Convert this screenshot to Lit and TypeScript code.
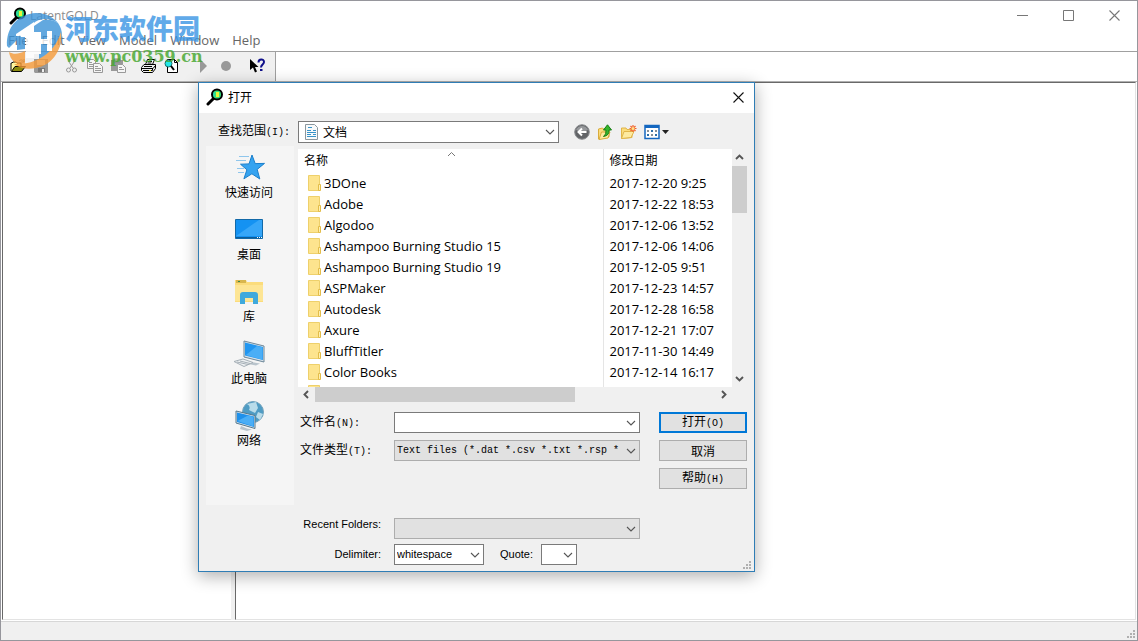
import { LitElement, html, css, svg } from "lit";
import { customElement, state } from "lit/decorators.js";

const FOLDERS: [string, string][] = [
  ["3DOne", "2017-12-20 9:25"],
  ["Adobe", "2017-12-22 18:53"],
  ["Algodoo", "2017-12-06 13:52"],
  ["Ashampoo Burning Studio 15", "2017-12-06 14:06"],
  ["Ashampoo Burning Studio 19", "2017-12-05 9:51"],
  ["ASPMaker", "2017-12-23 14:57"],
  ["Autodesk", "2017-12-28 16:58"],
  ["Axure", "2017-12-21 17:07"],
  ["BluffTitler", "2017-11-30 14:49"],
  ["Color Books", "2017-12-14 16:17"],
  ["", ""],
];

const magnifier = html`<svg width="18" height="18" viewBox="0 0 18 18" aria-hidden="true">
  <path d="M2 16 7.500 10.500" stroke="#000" stroke-width="3" stroke-linecap="round" />
  <circle cx="11" cy="6.500" r="5" fill="#35e07a" stroke="#000" stroke-width="2" />
  <path d="M10 4h3v5h-3z" fill="#e8f53a" />
  <path d="M8 4.500v4" stroke="#25d8d0" stroke-width="1" />
</svg>`;

const chevron = html`<svg class="chev" width="10" height="6" viewBox="0 0 10 6" aria-hidden="true">
  <path d="M1 1 5 5 9 1" fill="none" stroke="#555" stroke-width="1.100" />
</svg>`;

const arrow = (d: string) => html`<svg width="9" height="9" viewBox="0 0 9 9" aria-hidden="true">
  <path d=${d} fill="none" stroke="#555" stroke-width="1.900" />
</svg>`;

const cross = (color: string) => html`<svg width="11" height="11" viewBox="0 0 11 11" aria-hidden="true">
  <path d="M.5.5l10 10M10.500.5l-10 10" stroke=${color} stroke-width="1.100" />
</svg>`;

const grip = html`<svg class="grip" width="9" height="9" viewBox="0 0 9 9" aria-hidden="true">
  <path d="M6 0h2v2h-2zM3 3h2v2h-2zM6 3h2v2h-2zM0 6h2v2h-2zM3 6h2v2h-2zM6 6h2v2h-2z" fill="#b0b0b0" />
</svg>`;

const folderIcon = html`<svg width="14" height="16" viewBox="0 0 14 16" aria-hidden="true">
  <path d="M.5.5h11v15h-11z" fill="#fde48e" stroke="#eed06b" />
  <path d="M10.500 9.500h2v6h-2z" fill="#fff0b0" stroke="#e3bd4a" />
</svg>`;

const TOOL_GROUPS = [
  [
    {
      name: "Open",
      art: svg`<path d="M1 13V5h1l1-1h3l1 1h4v3" fill="#fff8a0" stroke="#000"/><path d="M1.500 13.500 5 8.500h10.500l-4 5z" fill="#8a8a10" stroke="#000"/><path d="M9 3c2-2 4-1 5 1m0-3v3h-3" fill="none" stroke="#777"/>`,
    },
    {
      name: "Save",
      art: svg`<path d="M1 1h14v14H2l-1-1z" fill="#999"/><path d="M4 2h8v5H4z" fill="#eee"/><path d="M5 10h7v4H5z" fill="#777"/><path d="M9 11h2v3H9z" fill="#eee"/>`,
    },
  ],
  [
    {
      name: "Cut",
      art: svg`<path d="M5 1v3l4 6M10 1v3l-4 6" fill="none" stroke="#999"/><circle cx="4.500" cy="12" r="2" fill="none" stroke="#999"/><circle cx="10.500" cy="12" r="2" fill="none" stroke="#999"/>`,
    },
    {
      name: "Copy",
      art: svg`<path d="M.5 1.500h6l2 2v7h-8z" fill="#f5f5f5" stroke="#999"/><path d="M2 4.500h3M2 6.500h4M2 8.500h4" stroke="#999"/><path d="M6.500 5.500h6l3 3v6h-9z" fill="#f5f5f5" stroke="#999"/><path d="M8 8.500h3M8 10.500h6M8 12.500h6" stroke="#999"/>`,
    },
    {
      name: "Paste",
      art: svg`<path d="M1 2h12v11H1z" fill="#999"/><path d="M4 1h6v3H4z" fill="#bbb" stroke="#888"/><path d="M7.500 6.500h5l3 3v5h-8z" fill="#f5f5f5" stroke="#999"/><path d="M9 9.500h3M9 11.500h5" stroke="#999"/>`,
    },
  ],
  [
    {
      name: "Print",
      art: svg`<path d="M4.500 6.500 6.500 1.500h7l-2 5z" fill="#fff" stroke="#000"/><path d="M7 3.500h4M6.500 5h4" stroke="#000"/><path d="M.5 9.500 3 6.500h11.500v4l-3 4H2.500l-2-2z" fill="#eee" stroke="#000"/><path d="M1 10.500h11l2.500-3M2 12.500h9.500v-2M3 8.500h8" fill="none" stroke="#000"/><path d="M8 12h2v1H8z" fill="#dede10"/>`,
    },
    {
      name: "Print preview",
      art: svg`<path d="M3.500 1.500h7l3 3v10h-10z" fill="#fff" stroke="#000"/><path d="M10.500 1.500v3h3" fill="none" stroke="#000"/><circle cx="4.500" cy="5.500" r="3.500" fill="#20e8e8" stroke="#1a6a6a"/><path d="M7 8l3 4" stroke="#000" stroke-width="2"/>`,
    },
  ],
  [
    { name: "Run", art: svg`<path d="M5 1v14l7-7z" fill="#999"/>` },
    { name: "Stop", art: svg`<circle cx="8" cy="8" r="5" fill="#999"/>` },
  ],
  [
    {
      name: "Context help",
      art: svg`<path d="M1 1v11l3-2.500 2 5 2-1-2-4.500h3.500z" fill="#000"/><path d="M9.500 4.500c0-4 5.500-4 5.500-.5 0 2.500-3 2.500-3 5.500" fill="none" stroke="#10108a" stroke-width="2"/><path d="M11 11h2.500v2H11z" fill="#10108a"/>`,
    },
  ],
];

const PLACES = [
  {
    name: "快速访问",
    art: svg`<path d="M19 3l3.200 8.600 9.300-.2-7.300 6 2.600 9.600-7.900-5.200-8 5 3-9-6.400-5.600 8.500-.3z" fill="#35a3f0" stroke="#1b7fcb"/><path d="M6 4.500h10M3 8.500h10M4 16.500h7M5 20.500h6" stroke="#8fc6ec"/>`,
  },
  {
    name: "桌面",
    art: svg`<path d="M2.500 5.500h27v19h-27z" fill="#1492f2" stroke="#1269a8"/><path d="M3 22 26 6h3v16z" fill="#36a6f8"/><path d="M3 23.500h26" stroke="#0b5c99" stroke-width="1"/><path d="M24 23.500h5" stroke="#fff" stroke-dasharray="1 1"/>`,
  },
  {
    name: "库",
    art: svg`<path d="M2 4h11l1 2h16v20H2z" fill="#fbdc7c"/><path d="M3 4h10v3H3z" fill="#d8b64e"/><path d="M5 5h2v1H5z" fill="#3b8a4b"/><path d="M2 9h28v16H2z" fill="#fde594"/><path d="M7 28V19q0-3 3-3h12q3 0 3 3v9h-5v-6h-8v6z" fill="#3fa9dc"/>`,
  },
  {
    name: "此电脑",
    art: svg`<path d="M11 3 31 8v16l-20-5z" fill="#d7e2ea" stroke="#6d8798"/><path d="M12 4.500 30 9v13l-18-4.500z" fill="#2196f0"/><path d="M13 17 24 8l5.500 1.300v12.500z" fill="#4aaef6"/><path d="M18 24l9 1.500-4 2-8-1.500z" fill="#b9c4cc"/><path d="M1 23.500 10 21l10 3.500-9 4z" fill="#eef1f3" stroke="#a5afb6"/><path d="M4 24l11 2.500M7 23l10 2.500" stroke="#a5afb6"/>`,
  },
  {
    name: "网络",
    art: svg`<circle cx="20" cy="12" r="10.500" fill="#4f9cc4" stroke="#78a5bd"/><path d="M14 4q4 2 2 6l6 3 3-5-2-6zM25 12l5 2-3 6-4-3z" fill="#b9dcea"/><path d="M3 11l19 4.500v13L3 23z" fill="#d7e2ea" stroke="#55788d"/><path d="M4 12.500 21 16.500v10.500l-17-5z" fill="#1f90ea"/><path d="M4.500 21 15 15.500l5.500 1.300v9.700z" fill="#4aaef6"/><path d="M8 26l6 2.500 5 1-5 1.500-7-2z" fill="#b9c4cc"/>`,
  },
];

@customElement("app-root")
export class AppRoot extends LitElement {
  @state() private fileName = "";

  static styles = css`
    :host {
      display: block;
      font-family: "Open Sans", "Noto Sans CJK SC", sans-serif;
      font-size: 12px;
      color: #000;
    }
    * {
      box-sizing: border-box;
    }
    svg {
      display: block;
      flex: none;
    }
    button {
      font: inherit;
      color: inherit;
      margin: 0;
      padding: 0;
      border: 0;
      background: none;
      display: flex;
      align-items: center;
      justify-content: center;
    }
    .window {
      position: relative;
      display: flex;
      flex-direction: column;
      height: 100vh;
      background: #fff;
      border: 1px solid #96969c;
      overflow: hidden;
    }
    .titlebar {
      display: flex;
      align-items: center;
      height: 29px;
      padding-left: 8px;
      color: #8c8c8c;
    }
    .titlebar h1 {
      flex: 1;
      margin: 0 0 0 3px;
      font-size: 12px;
      font-weight: 400;
    }
    .caption {
      width: 46px;
      height: 28px;
    }
    .menubar {
      display: flex;
      height: 21px;
      padding: 0 0 1px 1px;
      color: #666;
      font-size: 13px;
    }
    .menubar button {
      padding: 0 7px 0 6px;
    }
    .toolrow {
      height: 30px;
      border-top: 1px solid #a0a0a0;
      display: flex;
    }
    .toolbar {
      display: flex;
      align-items: center;
      gap: 8px;
      padding: 0 7px 2px 5px;
      background: #f0f0f0;
      border-right: 1px solid #a0a0a0;
    }
    .group {
      display: flex;
    }
    .tool {
      width: 23px;
      height: 22px;
    }
    .workspace {
      flex: 1;
      display: flex;
      padding: 0 1px;
      border-top: 1px solid #b0b0b0;
      border-bottom: 1px solid #fff;
    }
    .pane {
      border-top: 1px solid #696969;
      border-left: 1px solid #696969;
      border-bottom: 1px solid #e3e3e3;
    }
    .tree {
      width: 229px;
    }
    .splitter {
      width: 4px;
      background: #f0f0f0;
    }
    .view {
      flex: 1;
      border-right: 1px solid #e3e3e3;
    }
    .status {
      display: flex;
      justify-content: flex-end;
      align-items: flex-end;
      height: 19px;
      background: #f0f0f0;
      border-top: 1px solid #d7d7d7;
      padding: 1px;
    }
    .watermark {
      position: absolute;
      left: 4px;
      top: 11px;
      display: flex;
      gap: 2px;
      opacity: 0.8;
      pointer-events: none;
    }
    .brand {
      display: flex;
      flex-direction: column;
    }
    .brand-name {
      font: 900 27px/32px "Noto Sans CJK SC", sans-serif;
      color: #3a96e4;
    }
    .brand-url {
      font: bold 16px/26px "DejaVu Serif", serif;
      color: #43a62c;
    }

    .dialog {
      position: absolute;
      left: 197px;
      top: 81px;
      width: 557px;
      background: #f0f0f0;
      border: 1px solid #2f7db5;
      box-shadow: 0 4px 16px rgba(0, 0, 0, 0.32);
    }
    .dialog-title {
      display: flex;
      align-items: center;
      gap: 4px;
      height: 30px;
      padding: 0 8px 2px 7px;
      background: #fff;
    }
    .dialog-title h2 {
      flex: 1;
      margin: 0;
      font-size: 12px;
      font-weight: 400;
    }
    .dialog-title button {
      width: 15px;
      height: 15px;
    }
    .body {
      display: grid;
      grid-template-columns: 88px 1fr;
      column-gap: 4px;
      row-gap: 3px;
      padding: 8px 7px 6px;
    }
    .song {
      font-family: "Noto Sans CJK SC", sans-serif;
      line-height: 18px;
    }
    .mono {
      font: 10px/18px "Liberation Mono", monospace;
    }
    .look-label {
      padding-left: 12px;
      white-space: nowrap;
    }
    .look {
      display: flex;
      align-items: center;
      gap: 15px;
    }
    .combo {
      display: grid;
      align-items: center;
      height: 21px;
    }
    .combo > * {
      grid-area: 1 / 1;
    }
    .combo select,
    .combo input {
      appearance: none;
      width: 100%;
      min-width: 0;
      height: 100%;
      margin: 0;
      padding: 0 18px 0 2px;
      border: 1px solid #7a7a7a;
      border-radius: 0;
      background: #fff;
      font: inherit;
      color: #000;
      outline: 0;
    }
    .combo .chev {
      justify-self: end;
      margin-right: 4px;
      pointer-events: none;
    }
    .combo.gray select {
      background: #e1e1e1;
      border-color: #adadad;
    }
    .look-combo {
      width: 261px;
      height: 22px;
    }
    .look-combo select {
      padding-left: 24px;
    }
    .look-combo .doc {
      margin-left: 7px;
      pointer-events: none;
    }
    .look-tools {
      display: flex;
      gap: 7px;
    }
    .places {
      align-self: start;
      height: 359px;
      margin: 0;
      padding: 6px 2px 6px 0;
      list-style: none;
      background: #f5f5f5;
    }
    .places button {
      width: 100%;
      height: 62px;
      flex-direction: column;
      justify-content: flex-start;
      line-height: 18px;
    }
    .content {
      padding-top: 3px;
    }
    .browser {
      display: grid;
      grid-template-columns: 1fr 15px;
      grid-template-rows: 238px 15px;
    }
    .list {
      overflow: hidden;
      background: #fff;
    }
    table {
      width: 100%;
      border-collapse: collapse;
      table-layout: fixed;
      font-size: 13px;
    }
    th,
    td {
      height: 21px;
      padding: 0;
      text-align: left;
      font-weight: 400;
      line-height: 20px;
      white-space: nowrap;
    }
    th {
      height: 23px;
      padding-left: 6px;
      font-size: 12px;
    }
    .name-col {
      width: 305px;
      border-right: 1px solid #e5e5e5;
    }
    .head {
      display: grid;
      grid-template-columns: 1fr 1fr;
    }
    .head svg {
      margin-left: -6px;
    }
    .file {
      display: flex;
      align-items: center;
      gap: 2px;
      padding-left: 10px;
    }
    td + td {
      padding-left: 6px;
    }
    .scroll {
      display: flex;
      background: #f0f0f0;
    }
    .scroll.vertical {
      flex-direction: column;
      justify-content: space-between;
    }
    .scroll button {
      width: 17px;
      height: 15px;
      flex: none;
    }
    .vertical button {
      width: 15px;
      height: 17px;
    }
    .track {
      flex: 1;
    }
    .thumb {
      background: #cdcdcd;
    }
    .vertical .thumb {
      height: 23%;
    }
    .horizontal .thumb {
      width: 65%;
      height: 100%;
    }
    .form {
      display: grid;
      grid-template-columns: 94px 1fr 88px;
      grid-auto-rows: 21px;
      row-gap: 7px;
      padding: 10px 0 0 2px;
    }
    .form .combo {
      margin-right: 19px;
    }
    .push {
      border: 1px solid #adadad;
      background: #e1e1e1;
    }
    .push.default {
      border: 2px solid #0078d7;
    }
    .extra {
      display: grid;
      grid-template-columns: 83px 1fr;
      grid-auto-rows: 21px;
      gap: 5px 13px;
      padding: 29px 107px 0 0;
      font: 11px/13px "Liberation Sans", sans-serif;
    }
    .extra > label {
      text-align: right;
    }
    .extra-row {
      display: flex;
      align-items: center;
    }
    .extra .line {
      line-height: 20px;
    }
    .delimiter {
      width: 90px;
      margin-right: 16px;
    }
    .quote {
      width: 36px;
      margin-left: 8px;
    }
    .dialog > .grip {
      position: absolute;
      right: 2px;
      bottom: 1px;
    }
  `;

  private latin(text: string) {
    return html`<span class="mono">${text}</span>`;
  }

  private renderToolbar() {
    return html`<div class="toolrow">
      <div class="toolbar" role="toolbar">
        ${TOOL_GROUPS.map(
          (group) => html`<div class="group">
            ${group.map(
              (t) => html`<button class="tool" aria-label=${t.name}>
                <svg width="16" height="16" viewBox="0 0 16 16" fill="none">${t.art}</svg>
              </button>`
            )}
          </div>`
        )}
      </div>
    </div>`;
  }

  private renderWatermark() {
    return html`<div class="watermark">
      <svg width="58" height="60" viewBox="0 0 58 60" aria-hidden="true">
        <path d="M2 34C1 15 13 2 31 1c10 0 17 4 22 10-9-5-17-5-23-1L4 36z" fill="#3c93d8" />
        <path d="M53 11c6 8 5 20-1 28-5 6-11 9-18 10V25h-5V14l9-6c6-1 11 0 15 3z" fill="#3c93d8" />
        <path d="M56 20c2 17-8 33-25 36-9 2-17 0-22-4 20 1 40-9 47-32z" fill="#f59a38" />
        <path d="M4 40c5 3 10 2 16-1v15c-9-1-15-6-16-14z" fill="#f59a38" />
        <path d="M11 22 29 10v36h-8V24H11z" fill="#fff" />
        <path d="M12 25h8v12l-8 1z" fill="#3c93d8" />
        <path d="M29 20h7v7h6v-8h5v20h-5v-7h-6v10h-7z" fill="#fff" />
      </svg>
      <div class="brand">
        <span class="brand-name">河东软件园</span>
        <span class="brand-url">www.pc0359.cn</span>
      </div>
    </div>`;
  }

  private renderLookIn() {
    return html`<label class="look-label song" for="look">查找范围${this.latin("(I):")}</label>
      <div class="look">
        <div class="combo look-combo">
          <select id="look"><option>文档</option></select>
          <svg class="doc" width="13" height="16" viewBox="0 0 13 16" aria-hidden="true">
            <path d="M.5.5h9l3 3v12H.5z" fill="#f8fafb" stroke="#8b979e" />
            <path d="M3 3.500h4M2 6.500h4M8 6.500h3M2 8.500h9M2 10.500h4M8 10.500h3M2 12.500h9" stroke="#3793c9" />
          </svg>
          ${chevron}
        </div>
        <div class="look-tools">
          <button aria-label="后退">
            <svg width="16" height="16" viewBox="0 0 16 16">
              <circle cx="8" cy="8" r="7.300" fill="#626467" stroke="#8b8d90" />
              <path d="M2 6a6.500 6.500 0 0 1 12 0q-6 3-12 0z" fill="#96989b" />
              <path d="M12.500 8H4.500M8 4.500 4.500 8 8 11.500" fill="none" stroke="#fff" stroke-width="2" />
            </svg>
          </button>
          <button aria-label="向上一级">
            <svg width="16" height="16" viewBox="0 0 16 16">
              <path d="M1.500 15V5l4-1 1 1H12v8z" fill="#fbdc7c" stroke="#d9ac3c" />
              <path d="M2 15.500 4.500 8H13l-2 6z" fill="#fdeaa0" stroke="#d9ac3c" />
              <path d="M6.500 12.500q3-2 2.500-6.500H6.500L10.500.8l4 5.200H12q.5 5.500-5.500 6.500z" fill="#35b52c" stroke="#177d14" />
            </svg>
          </button>
          <button aria-label="新建文件夹">
            <svg width="17" height="16" viewBox="0 0 17 16">
              <path d="M1.500 14.500V4h4.500l1 1.500h5v8z" fill="#fbdc7c" stroke="#e0b54a" />
              <path d="M1.500 14.500 4 7.500h10l-3 6z" fill="#fdeaa0" stroke="#e0b54a" />
              <path d="M13 1v7M9.500 4.500h7M10.500 2l5 5M15.500 2l-5 5" stroke="#f2622c" stroke-width="1.200" />
              <circle cx="13" cy="4.500" r="1.500" fill="#ffe28a" />
            </svg>
          </button>
          <button aria-label="查看">
            <svg width="26" height="16" viewBox="0 0 26 16">
              <path d="M1 1.500h14v13H1z" fill="#fff" stroke="#1467c0" stroke-width="1.500" />
              <path d="M1 1h14v3H1z" fill="#1467c0" />
              <path d="M3 6h2v2H3zM11 6h2v2h-2zM7 10h2v2H7z" fill="#8a9096" />
              <path d="M7 6h2v2H7zM3 10h2v2H3zM11 10h2v2h-2z" fill="#2f6fa8" />
              <path d="M18 6h7l-3.500 4z" fill="#222" />
            </svg>
          </button>
        </div>
      </div>`;
  }

  private renderBrowser() {
    return html`<div class="browser">
      <div class="list">
        <table>
          <thead>
            <tr>
              <th class="name-col">
                <div class="head">
                  <span>名称</span>
                  <svg width="9" height="6" viewBox="0 0 9 6" aria-hidden="true">
                    <path d="M1 5 4.500 1.500 8 5" fill="none" stroke="#777" />
                  </svg>
                </div>
              </th>
              <th>修改日期</th>
            </tr>
          </thead>
          <tbody>
            ${FOLDERS.map(
              ([name, date]) => html`<tr>
                <td class="name-col"><div class="file">${folderIcon}<span>${name}</span></div></td>
                <td>${date}</td>
              </tr>`
            )}
          </tbody>
        </table>
      </div>
      <div class="scroll vertical">
        <button aria-label="向上滚动">${arrow("M1 6 4.500 2.500 8 6")}</button>
        <div class="track"><div class="thumb"></div></div>
        <button aria-label="向下滚动">${arrow("M1 3 4.500 6.500 8 3")}</button>
      </div>
      <div class="scroll horizontal">
        <button aria-label="向左滚动">${arrow("M6 1 2.500 4.500 6 8")}</button>
        <div class="track"><div class="thumb"></div></div>
        <button aria-label="向右滚动">${arrow("M3 1 6.500 4.500 3 8")}</button>
      </div>
    </div>`;
  }

  private renderDialog() {
    return html`<section class="dialog" role="dialog" aria-labelledby="dlg">
      <header class="dialog-title">
        ${magnifier}
        <h2 id="dlg">打开</h2>
        <button aria-label="关闭">${cross("#111")}</button>
      </header>
      <div class="body">
        ${this.renderLookIn()}
        <ul class="places">
          ${PLACES.map(
            (p) => html`<li>
              <button>
                <svg width="32" height="32" viewBox="0 0 32 32" fill="none">${p.art}</svg>
                <span>${p.name}</span>
              </button>
            </li>`
          )}
        </ul>
        <div class="content">
          ${this.renderBrowser()}
          <div class="form song">
            <label for="file">文件名${this.latin("(N):")}</label>
            <div class="combo">
              <input
                id="file"
                type="text"
                .value=${this.fileName}
                @input=${(e: Event) => (this.fileName = (e.target as HTMLInputElement).value)}
              />
              ${chevron}
            </div>
            <button class="push default"><span>打开${this.latin("(O)")}</span></button>
            <label for="type">文件类型${this.latin("(T):")}</label>
            <div class="combo gray mono">
              <select id="type">
                <option>Text files (*.dat *.csv *.txt *.rsp *</option>
              </select>
              ${chevron}
            </div>
            <button class="push">取消</button>
            <span></span><span></span>
            <button class="push"><span>帮助${this.latin("(H)")}</span></button>
          </div>
          <div class="extra">
            <label for="recent">Recent Folders:</label>
            <div class="combo gray"><select id="recent"></select>${chevron}</div>
            <label class="line" for="delimiter">Delimiter:</label>
            <div class="extra-row">
              <div class="combo delimiter">
                <select id="delimiter"><option>whitespace</option></select>${chevron}
              </div>
              <label for="quote">Quote:</label>
              <div class="combo quote"><select id="quote"></select>${chevron}</div>
            </div>
          </div>
        </div>
      </div>
      ${grip}
    </section>`;
  }

  render() {
    return html`<div class="window">
      <header class="titlebar">
        ${magnifier}
        <h1>LatentGOLD</h1>
        <button class="caption" aria-label="Minimize">
          <svg width="11" height="11" viewBox="0 0 11 11"><path d="M0 5.500h11" stroke="#777" /></svg>
        </button>
        <button class="caption" aria-label="Maximize">
          <svg width="11" height="11" viewBox="0 0 11 11">
            <path d="M.5.5h10v10H.5z" fill="none" stroke="#777" />
          </svg>
        </button>
        <button class="caption" aria-label="Close">${cross("#777")}</button>
      </header>
      <nav class="menubar">
        ${["File", "Edit", "View", "Model", "Window", "Help"].map((m) => html`<button>${m}</button>`)}
      </nav>
      ${this.renderToolbar()}
      <main class="workspace">
        <div class="pane tree"></div>
        <div class="splitter"></div>
        <div class="pane view"></div>
      </main>
      <footer class="status">${grip}</footer>
      ${this.renderWatermark()} ${this.renderDialog()}
    </div>`;
  }
}
